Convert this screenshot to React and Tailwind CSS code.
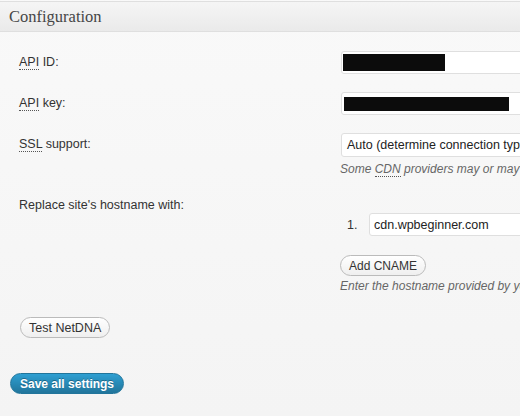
export default function App() {
  return (
    <div className="w-[520px] h-[416px] overflow-hidden bg-gradient-to-b from-[#f9f9f9] to-[#f4f4f4] text-[12.5px] leading-4 text-[#333] font-['Liberation_Sans',Arial,sans-serif]">
      <div className="h-px" />
      {/* header */}
      <div className="h-[31px] border-y border-[#dfdfdf] bg-gradient-to-b from-[#f5f5f5] to-[#eaeaea] pl-[9px] flex items-center">
        <h3 className="font-['Liberation_Serif',Georgia,serif] text-[16.5px] text-[#464646] leading-5 pt-[1px]">Configuration</h3>
      </div>

      <div className="pl-[19px] pt-[19px]">
        {/* API ID */}
        <div className="flex items-start">
          <div className="w-[322px] shrink-0 pt-[3px]">
            <span className="border-b border-dotted border-[#555]">API</span> ID:
          </div>
          <div className="w-[300px] shrink-0 h-[23px] bg-white border border-[#dfdfdf] rounded-[3px] flex items-center pl-[1px]">
            <div className="w-[102px] h-[17px] bg-[#0c0c0c]" />
          </div>
        </div>

        {/* API key */}
        <div className="flex items-start mt-[18px]">
          <div className="w-[322px] shrink-0 pt-[3px]">
            <span className="border-b border-dotted border-[#555]">API</span> key:
          </div>
          <div className="w-[300px] shrink-0 h-[23px] bg-white border border-[#dfdfdf] rounded-[3px] flex items-center pl-[2px]">
            <div className="w-[165px] h-[14px] bg-[#0c0c0c]" />
          </div>
        </div>

        {/* SSL */}
        <div className="flex items-start mt-[18px]">
          <div className="w-[322px] shrink-0 pt-[3px]">
            <span className="border-b border-dotted border-[#555]">SSL</span> support:
          </div>
          <div className="w-[300px] shrink-0">
            <div className="h-[24px] bg-white border border-[#dfdfdf] rounded-[3px] flex items-center pl-[5px] text-[#222] whitespace-nowrap">
              Auto (determine connection type automatically)
            </div>
            <p className="mt-[4px] -ml-px italic text-[12px] text-[#666] whitespace-nowrap">
              Some <span className="border-b border-dotted border-[#555]">CDN</span> providers may or may not support SSL
            </p>
          </div>
        </div>

        {/* hostname */}
        <div className="flex items-start mt-[20px]">
          <div className="w-[322px] shrink-0">Replace site's hostname with:</div>
          <div className="w-[300px] shrink-0 pt-[16px]">
            <div className="flex items-center">
              <span className="w-[28px] shrink-0 pl-[6px]">1.</span>
              <div className="w-[260px] shrink-0 h-[23px] bg-white border border-[#dfdfdf] rounded-[3px] flex items-center pl-[4px] text-[#222]">
                cdn.wpbeginner.com
              </div>
            </div>
            <button className="mt-[19px] -ml-px h-[21px] px-[8px] rounded-full border border-[#bbb] bg-gradient-to-b from-white to-[#efefef] text-[#333] text-[12px] leading-4">
              Add CNAME
            </button>
            <p className="mt-[2px] -ml-px italic text-[12px] text-[#666] whitespace-nowrap">
              Enter the hostname provided by your CDN provider
            </p>
          </div>
        </div>
      </div>

      <div className="pl-[20px] mt-[23px]">
        <button className="h-[21px] px-[8px] rounded-full border border-[#bbb] bg-gradient-to-b from-white to-[#efefef] text-[#333] leading-4">
          Test NetDNA
        </button>
      </div>

      <div className="pl-[10px] mt-[35px]">
        <button className="h-[21px] px-[9px] rounded-full border border-[#21759b] bg-gradient-to-b from-[#2e9fd2] to-[#21759b] text-white text-[12px] font-bold leading-4 [text-shadow:0_-1px_0_rgba(0,0,0,0.3)]">
          Save all settings
        </button>
      </div>
    </div>
  );
}
